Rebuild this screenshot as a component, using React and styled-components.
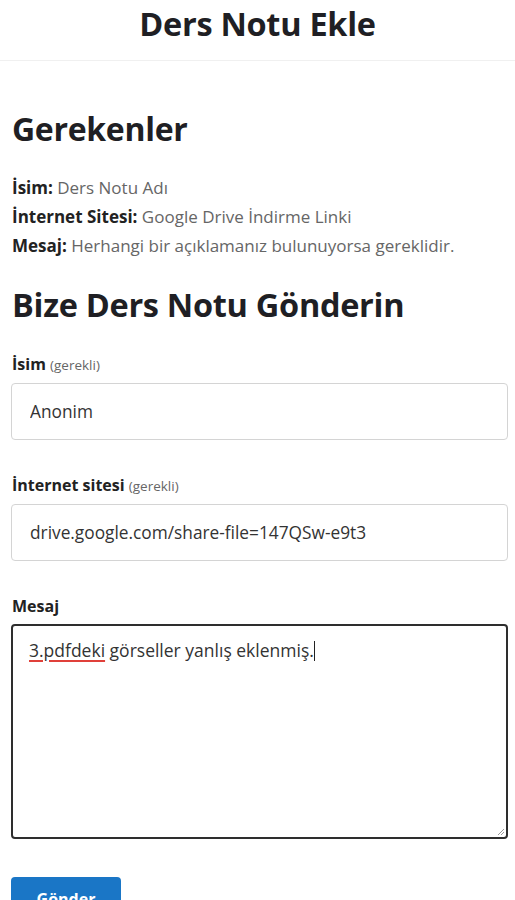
import styled, { createGlobalStyle } from "styled-components";

const GlobalStyle = createGlobalStyle`
  html, body {
    margin: 0;
    padding: 0;
    background: #ffffff;
  }
  body {
    font-family: "Open Sans", "Noto Sans", sans-serif;
    color: #222;
  }
  * {
    box-sizing: border-box;
  }
`;

const Header = styled.header`
  height: 61px;
  border-bottom: 1px solid #f0f0f0;
  display: flex;
  justify-content: center;
  padding-top: 1px;
`;

const Title = styled.h1`
  margin: 0;
  font-size: 32.5px;
  font-weight: 700;
  color: #1f1f24;
  letter-spacing: -0.3px;
`;

const Main = styled.main`
  padding: 0 7px 0 11px;
`;

const SectionTitle = styled.h2`
  margin: ${(p) => p.$top || "0"} 0 0 1px;
  font-size: ${(p) => p.$size || "32px"};
  line-height: 40px;
  font-weight: 700;
  color: #1f1f24;
  letter-spacing: -0.3px;
`;

const InfoList = styled.div`
  margin-top: 24px;
  display: flex;
  flex-direction: column;
`;

const InfoRow = styled.p`
  margin: 0 0 0 1px;
  font-size: 17px;
  line-height: 29px;
  color: #666;
`;

const InfoKey = styled.b`
  color: #222;
  font-weight: 700;
`;

const Form = styled.form`
  display: flex;
  flex-direction: column;
`;

const Field = styled.div`
  margin-top: ${(p) => p.$top || "0"};
  display: flex;
  flex-direction: column;
`;

const Label = styled.label`
  font-size: 16px;
  font-weight: 700;
  color: #222;
  line-height: 20px;
  margin: 0 0 8px 1px;
`;

const Hint = styled.span`
  font-size: 13.5px;
  font-weight: 400;
  color: #666;
`;

const Input = styled.input`
  width: 100%;
  height: 57px;
  border: 1px solid #d4d4d4;
  border-radius: 4px;
  padding: 0 18px;
  font-family: "Open Sans", "Noto Sans", sans-serif;
  font-size: 17.3px;
  color: #333;
  background: #fff;
  outline: none;
`;

const TextArea = styled.div`
  width: 100%;
  height: 215px;
  border: 2px solid #2e2e2e;
  border-radius: 4px;
  padding: 12px 16px;
  font-size: 17.5px;
  color: #333;
  position: relative;
`;

const Misspelled = styled.span`
  text-decoration-line: underline;
  text-decoration-color: #e0403a;
  text-decoration-thickness: 1.5px;
  text-underline-offset: 3px;
`;

const Caret = styled.span`
  display: inline-block;
  width: 1px;
  height: 20px;
  background: #222;
  vertical-align: -4px;
`;

const Grip = styled.svg`
  position: absolute;
  right: 1px;
  bottom: 1px;
`;

const Button = styled.button`
  margin-top: 38px;
  align-self: flex-start;
  width: 110px;
  height: 44px;
  border: none;
  border-radius: 4px;
  background: #1a76c6;
  color: #fff;
  font-family: "Open Sans", "Noto Sans", sans-serif;
  font-size: 16px;
  font-weight: 700;
  padding: 0;
  line-height: 44px;
`;

export default function App() {
  return (
    <>
      <GlobalStyle />
      <Header>
        <Title>Ders Notu Ekle</Title>
      </Header>
      <Main>
        <SectionTitle $top="48px" $size="32px">Gerekenler</SectionTitle>
        <InfoList>
          <InfoRow>
            <InfoKey>İsim:</InfoKey> Ders Notu Adı
          </InfoRow>
          <InfoRow>
            <InfoKey>İnternet Sitesi:</InfoKey> Google Drive İndirme Linki
          </InfoRow>
          <InfoRow>
            <InfoKey>Mesaj:</InfoKey> Herhangi bir açıklamanız bulunuyorsa gereklidir.
          </InfoRow>
        </InfoList>
        <SectionTitle $top="25px" $size="32.5px">Bize Ders Notu Gönderin</SectionTitle>
        <Form onSubmit={(e) => e.preventDefault()}>
          <Field $top="29px">
            <Label htmlFor="isim">
              İsim <Hint>(gerekli)</Hint>
            </Label>
            <Input id="isim" defaultValue="Anonim" />
          </Field>
          <Field $top="35px">
            <Label htmlFor="site">
              İnternet sitesi <Hint>(gerekli)</Hint>
            </Label>
            <Input id="site" defaultValue="drive.google.com/share-file=147QSw-e9t3" />
          </Field>
          <Field $top="35px">
            <Label>Mesaj</Label>
            <TextArea>
              <Misspelled>3.pdfdeki</Misspelled> görseller yanlış eklenmiş.
              <Caret />
              <Grip width="9" height="9" viewBox="0 0 9 9">
                <path d="M8 2 L2 8 M8 5 L5 8" stroke="#999" strokeWidth="1" />
              </Grip>
            </TextArea>
          </Field>
          <Button type="submit">Gönder</Button>
        </Form>
      </Main>
    </>
  );
}
